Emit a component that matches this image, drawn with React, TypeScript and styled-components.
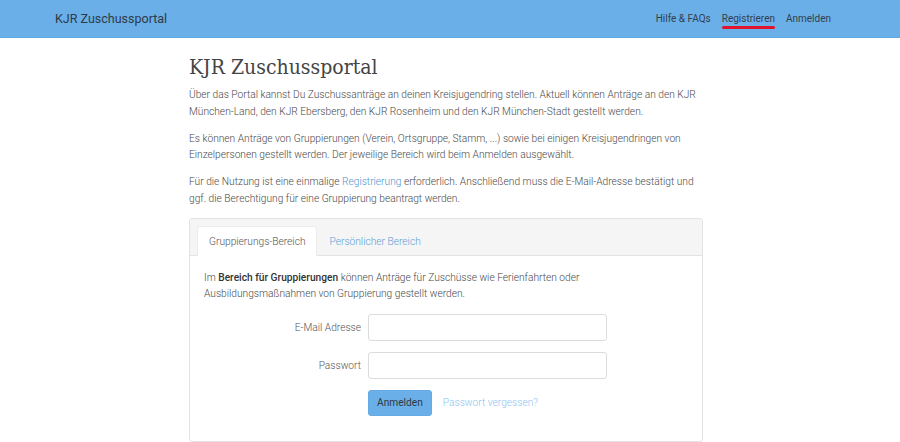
import React, { FunctionComponent } from 'react';
import styled, { createGlobalStyle } from 'styled-components';

const GlobalStyle = createGlobalStyle`
  body {
    margin: 0;
    background: #fff;
    font-family: Roboto, "Liberation Sans", sans-serif;
    font-weight: 300;
    color: #444;
  }
  * { box-sizing: border-box; }
`;

const S = {
  Navbar: styled.nav`
    height: 38px;
    background: #6aafe8;
    border-bottom: 1px solid #62a8e2;
    display: flex;
    align-items: center;
    justify-content: space-between;
    padding: 0 69px 0 55px;
  `,

  Brand: styled.a`
    font-size: 12.5px;
    font-weight: 400;
    color: #2f3a45;
    text-decoration: none;
  `,

  NavLinks: styled.div`
    display: flex;
    gap: 11px;
  `,

  NavLink: styled.a<{ $active?: boolean }>`
    position: relative;
    font-size: 10px;
    font-weight: 400;
    color: #33414e;
    text-decoration: none;
    padding: 4px 0;

    &::after {
      content: '';
      display: ${(p) => (p.$active ? 'block' : 'none')};
      position: absolute;
      left: 0;
      right: 0;
      bottom: -1px;
      height: 3px;
      border-radius: 2px;
      background: #e2142c;
    }
  `,

  Container: styled.main`
    width: 522px;
    margin: 0 auto;
    padding: 15px 8px 0 0;
  `,

  Title: styled.h1`
    margin: 0 0 6px;
    font-family: "DejaVu Serif Condensed", "DejaVu Serif", serif;
    font-stretch: condensed;
    font-weight: 300;
    font-size: 21px;
    line-height: 28px;
    color: #444;
  `,

  Paragraph: styled.p`
    margin: 0 0 10.5px;
    font-size: 10.2px;
    line-height: 16.5px;
    color: #4a4a4a;
  `,

  Link: styled.a<{ $light?: boolean }>`
    font-size: 10.2px;
    color: ${(p) => (p.$light ? '#8ec4ef' : '#4d94d0')};
    text-decoration: none;
  `,

  Card: styled.section`
    margin-top: 10px;
    border: 1px solid #e3e3e3;
    border-radius: 3px;
    overflow: hidden;
  `,

  TabBar: styled.div`
    display: flex;
    padding: 7px 7px 0;
    background: #f5f5f5;
    border-bottom: 1px solid #e3e3e3;
  `,

  Tab: styled.button<{ $active?: boolean }>`
    border: 1px solid ${(p) => (p.$active ? '#ececec' : 'transparent')};
    border-bottom: none;
    border-radius: 3px 3px 0 0;
    margin-bottom: -1px;
    background: ${(p) => (p.$active ? '#fff' : 'transparent')};
    color: ${(p) => (p.$active ? '#555' : '#5c9fd8')};
    font-family: inherit;
    font-weight: 300;
    font-size: 10.2px;
    height: 30px;
    padding: 0 11px;
    cursor: pointer;
  `,

  CardBody: styled.div`
    padding: 14px 14px 25px;
  `,

  Intro: styled.p`
    margin: 0 0 11px;
    font-size: 10.2px;
    line-height: 16.5px;
    color: #4a4a4a;

    strong { font-weight: 500; color: #333; }
  `,

  FormRow: styled.div`
    display: grid;
    grid-template-columns: 157px 239px;
    column-gap: 7px;
    align-items: center;
    margin-bottom: 11px;

    &:last-child { margin-bottom: 0; }
  `,

  Label: styled.label`
    text-align: right;
    font-size: 10.2px;
    color: #555;
  `,

  Input: styled.input`
    height: 27px;
    width: 100%;
    border: 1px solid #dcdcdc;
    border-radius: 3px;
    padding: 0 8px;
    font-family: inherit;
  `,

  Actions: styled.div`
    display: flex;
    align-items: center;
    gap: 11px;
  `,

  Button: styled.button`
    height: 26px;
    padding: 0 8px;
    border: 1px solid #64aae4;
    border-radius: 3px;
    background: #6aafe8;
    color: #2f3a45;
    font-family: inherit;
    font-weight: 400;
    font-size: 10.2px;
    cursor: pointer;
  `,
};

const App: FunctionComponent = () => (
  <>
    <GlobalStyle />
    <S.Navbar>
      <S.Brand href="#">KJR Zuschussportal</S.Brand>
      <S.NavLinks>
        <S.NavLink href="#">Hilfe &amp; FAQs</S.NavLink>
        <S.NavLink href="#" $active>Registrieren</S.NavLink>
        <S.NavLink href="#">Anmelden</S.NavLink>
      </S.NavLinks>
    </S.Navbar>

    <S.Container>
      <S.Title>KJR Zuschussportal</S.Title>
      <S.Paragraph>
        Über das Portal kannst Du Zuschussanträge an deinen Kreisjugendring stellen. Aktuell können Anträge an den KJR
        München-Land, den KJR Ebersberg, den KJR Rosenheim und den KJR München-Stadt gestellt werden.
      </S.Paragraph>
      <S.Paragraph>
        Es können Anträge von Gruppierungen (Verein, Ortsgruppe, Stamm, ...) sowie bei einigen Kreisjugendringen von
        Einzelpersonen gestellt werden. Der jeweilige Bereich wird beim Anmelden ausgewählt.
      </S.Paragraph>
      <S.Paragraph>
        Für die Nutzung ist eine einmalige <S.Link href="#">Registrierung</S.Link> erforderlich. Anschließend muss die
        E-Mail-Adresse bestätigt und ggf. die Berechtigung für eine Gruppierung beantragt werden.
      </S.Paragraph>

      <S.Card>
        <S.TabBar>
          <S.Tab $active>Gruppierungs-Bereich</S.Tab>
          <S.Tab>Persönlicher Bereich</S.Tab>
        </S.TabBar>
        <S.CardBody>
          <S.Intro>
            Im <strong>Bereich für Gruppierungen</strong> können Anträge für Zuschüsse wie Ferienfahrten oder
            Ausbildungsmaßnahmen von Gruppierung gestellt werden.
          </S.Intro>
          <S.FormRow>
            <S.Label htmlFor="email">E-Mail Adresse</S.Label>
            <S.Input id="email" type="email" />
          </S.FormRow>
          <S.FormRow>
            <S.Label htmlFor="password">Passwort</S.Label>
            <S.Input id="password" type="password" />
          </S.FormRow>
          <S.FormRow>
            <span />
            <S.Actions>
              <S.Button>Anmelden</S.Button>
              <S.Link href="#" $light>Passwort vergessen?</S.Link>
            </S.Actions>
          </S.FormRow>
        </S.CardBody>
      </S.Card>
    </S.Container>
  </>
);

export default App;
